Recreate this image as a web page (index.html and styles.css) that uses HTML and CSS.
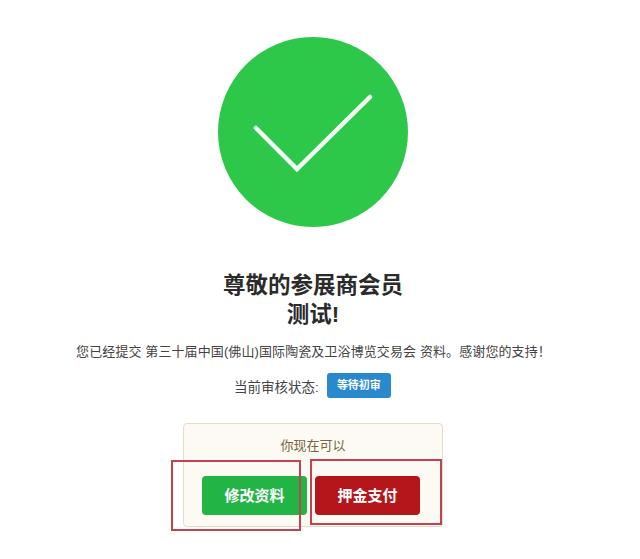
FILE: index.html
```html
<!DOCTYPE html>
<html lang="zh">
<head>
<meta charset="utf-8">
<title>资料提交成功</title>
<link rel="stylesheet" href="styles.css">
</head>
<body>
<main class="page">
  <svg class="check" viewBox="0 0 190 190" width="190" height="190" aria-hidden="true">
    <circle cx="95" cy="95" r="95" fill="#2dc84a"/>
    <path d="M38 91 L79 132 L152 60" fill="none" stroke="#f2fff2" stroke-width="4.5" stroke-linecap="round" stroke-linejoin="miter"/>
  </svg>
  <h1 class="title">尊敬的参展商会员<br>测试!</h1>
  <p class="message">您已经提交 第三十届中国(佛山)国际陶瓷及卫浴博览交易会 资料。感谢您的支持！</p>
  <div class="status">
    <span class="status-label">当前审核状态:</span>
    <span class="badge">等待初审</span>
  </div>
  <section class="panel">
    <div class="panel-title">你现在可以</div>
    <div class="actions">
      <a class="btn btn-green">修改资料</a>
      <a class="btn btn-red">押金支付</a>
    </div>
    <div class="mark mark-left"></div>
    <div class="mark mark-right"></div>
  </section>
</main>
</body>
</html>
```
FILE: styles.css
```css
* { box-sizing: border-box; }
html, body { margin: 0; padding: 0; background: #fff; }
body {
  width: 640px;
  height: 559px;
  overflow: hidden;
  font-family: "Liberation Sans", "Noto Sans CJK SC", sans-serif;
  color: #333;
}
.page {
  display: flex;
  flex-direction: column;
  align-items: center;
  padding-top: 37px;
}
.check { display: block; margin-left: -14px; }
.title {
  margin: 44px 0 0;
  width: 100%;
  padding-right: 14px;
  text-align: center;
  font-size: 22.5px;
  line-height: 29px;
  font-weight: 700;
  color: #2b2b2b;
}
.message {
  margin: 13px 0 0;
  font-size: 13px;
  letter-spacing: 0.1px;
  line-height: 20px;
  color: #444;
  white-space: nowrap;
  padding-right: 13px;
}
.status {
  display: flex;
  align-items: center;
  gap: 8px;
  margin: 11px 0 0;
  color: #444;
  padding-right: 15px;
}
.status-label { font-size: 13.5px; }
.badge {
  display: block;
  width: 64px;
  height: 25px;
  line-height: 25px;
  text-align: center;
  font-size: 11px;
  font-weight: 700;
  color: #fff;
  background: #2a88cf;
  border-radius: 3px;
}
.panel {
  position: relative;
  width: 260px;
  height: 104px;
  margin: 25px 0 0;
  padding-top: 13px;
  background: #fdf9f3;
  border: 1px solid #e6dcc8;
  border-radius: 4px;
  transform: translateX(-7px);
}
.panel-title {
  text-align: center;
  font-size: 13px;
  line-height: 18px;
  color: #77663f;
}
.actions {
  display: flex;
  gap: 8px;
  margin: 21px 0 0 18px;
}
.btn {
  display: block;
  width: 105px;
  height: 39px;
  line-height: 39px;
  text-align: center;
  font-size: 15px;
  font-weight: 700;
  color: #fff;
  border-radius: 4px;
}
.btn-green { background: #22b546; }
.btn-red { background: #b5161b; }
.mark {
  position: absolute;
  border: 2px solid #c0434f;
}
.mark-left { left: -13px; top: 36px; width: 130px; height: 71px; }
.mark-right { left: 126px; top: 35px; width: 132px; height: 66px; }
```
